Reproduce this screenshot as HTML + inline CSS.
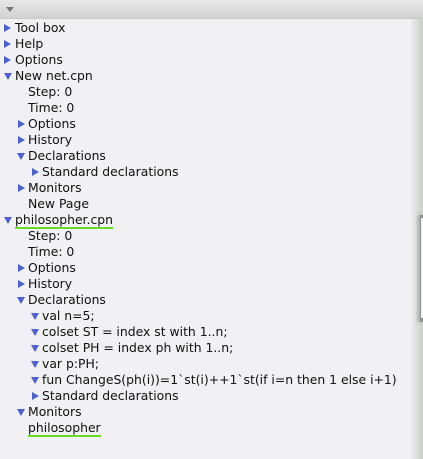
<!DOCTYPE html>
<html><head><style>
html,body{margin:0;padding:0;width:423px;height:459px;overflow:hidden;background:#f0f0f5;font-family:"DejaVu Sans","Liberation Sans",sans-serif;font-size:12.4px;color:#111;position:relative}
.hdr{position:absolute;left:0;top:0;width:423px;height:18px;background:linear-gradient(#e8e8e8,#d2d2d2);border-bottom:1px solid #c8c8c8}
.hdr:after{content:"";position:absolute;left:6px;top:7px;border-left:4px solid transparent;border-right:4px solid transparent;border-top:5px solid #777}
.edge{position:absolute;left:410px;top:19px;width:13px;height:440px;background:linear-gradient(90deg,#f0f0f5,#d2d8d2 70%,#c6cfc6)}
.blk{position:absolute;left:420px;top:215px;width:3px;height:107px;background:#8c9290;box-shadow:-2px 0 3px #a0a8a4}
.blk:after{content:"";position:absolute;left:1px;top:3px;width:2px;height:100px;background:#f5f5f5}
.r{position:absolute;height:16px;line-height:16px;white-space:nowrap;margin-top:1px}
.tr,.td{position:absolute;top:4px;width:0;height:0}
.tr{border-top:4px solid transparent;border-bottom:4px solid transparent;border-left:7px solid #4d62d0;top:4px}
.td{border-left:4px solid transparent;border-right:4px solid transparent;border-top:7px solid #4d62d0;top:5px}
.u{border-bottom:2px solid #66dd22;line-height:14px;display:inline-block}
</style></head><body>
<div class="hdr"></div>
<div class="edge"></div><div class="blk"></div>
<div class="r" style="top:19px;left:15px"><i class="tr" style="left:-11px"></i>Tool box</div>
<div class="r" style="top:35px;left:15px"><i class="tr" style="left:-11px"></i>Help</div>
<div class="r" style="top:51px;left:15px"><i class="tr" style="left:-11px"></i>Options</div>
<div class="r" style="top:67px;left:15px"><i class="td" style="left:-11px"></i>New net.cpn</div>
<div class="r" style="top:83px;left:28px">Step: 0</div>
<div class="r" style="top:99px;left:28px">Time: 0</div>
<div class="r" style="top:115px;left:28px"><i class="tr" style="left:-10px"></i>Options</div>
<div class="r" style="top:131px;left:28px"><i class="tr" style="left:-10px"></i>History</div>
<div class="r" style="top:147px;left:28px"><i class="td" style="left:-11px"></i>Declarations</div>
<div class="r" style="top:163px;left:42px"><i class="tr" style="left:-10px"></i>Standard declarations</div>
<div class="r" style="top:179px;left:28px"><i class="tr" style="left:-10px"></i>Monitors</div>
<div class="r" style="top:195px;left:28px">New Page</div>
<div class="r" style="top:211px;left:15px"><i class="td" style="left:-11px"></i><span class="u">philosopher.cpn</span></div>
<div class="r" style="top:227px;left:28px">Step: 0</div>
<div class="r" style="top:243px;left:28px">Time: 0</div>
<div class="r" style="top:259px;left:28px"><i class="tr" style="left:-10px"></i>Options</div>
<div class="r" style="top:275px;left:28px"><i class="tr" style="left:-10px"></i>History</div>
<div class="r" style="top:291px;left:28px"><i class="td" style="left:-11px"></i>Declarations</div>
<div class="r" style="top:307px;left:42px"><i class="td" style="left:-11px"></i>val n=5;</div>
<div class="r" style="top:323px;left:42px"><i class="td" style="left:-11px"></i>colset ST = index st with 1..n;</div>
<div class="r" style="top:339px;left:42px"><i class="td" style="left:-11px"></i>colset PH = index ph with 1..n;</div>
<div class="r" style="top:355px;left:42px"><i class="td" style="left:-11px"></i>var p:PH;</div>
<div class="r" style="top:371px;left:42px"><i class="td" style="left:-11px"></i>fun ChangeS(ph(i))=1`st(i)++1`st(if i=n then 1 else i+1)</div>
<div class="r" style="top:387px;left:42px"><i class="tr" style="left:-10px"></i>Standard declarations</div>
<div class="r" style="top:403px;left:28px"><i class="td" style="left:-11px"></i>Monitors</div>
<div class="r" style="top:419px;left:28px"><span class="u">philosopher</span></div>
</body></html>
